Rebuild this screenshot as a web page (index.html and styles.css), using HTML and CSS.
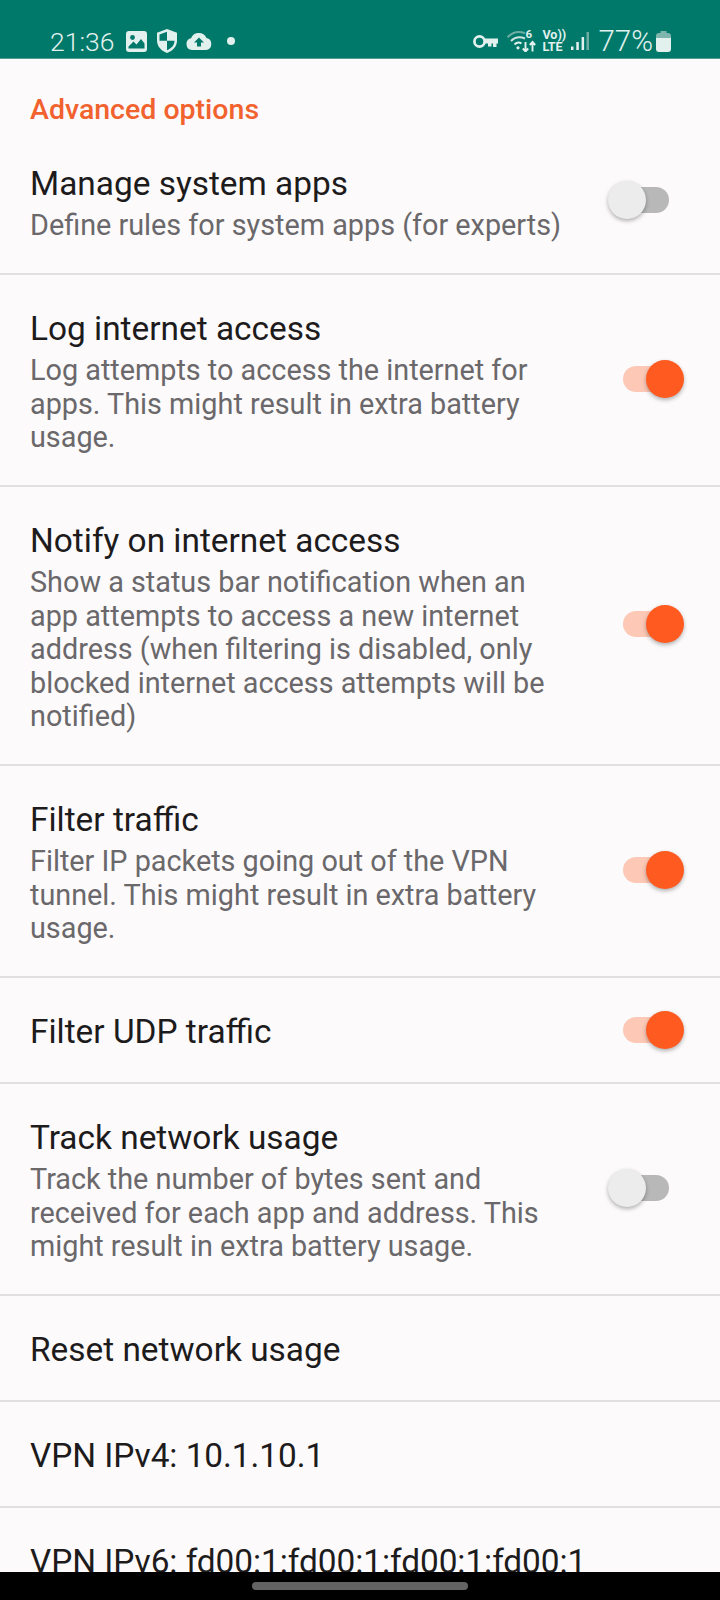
FILE: index.html
```html
<!DOCTYPE html>
<html lang="en">
<head>
    <meta charset="UTF-8">
    <meta name="viewport" content="width=device-width, initial-scale=1.0">
    <title>Advanced options</title>
    <link rel="stylesheet" href="styles.css">
</head>
<body>
    <div class="status-bar">
        <div class="status-left">
            <span class="clock">21:36</span>
            <svg class="icon icon-image" width="21" height="21" viewBox="0 0 21 21"><rect width="21" height="21" rx="3" fill="#e3f1ee"/><circle cx="6.500" cy="6.500" r="2.400" fill="#00796b"/><path d="M2.500 17.500v-2l5-5 3 3 4.500-5.500 3.500 4.500v5z" fill="#00796b"/></svg>
            <svg class="icon icon-shield" width="20" height="24" viewBox="0 0 20 24"><path d="M10 0l10 3.800v7.700c0 5.800-4 10.300-10 12.500C4 21.800 0 17.300 0 11.500V3.800z" fill="#e3f1ee"/><path d="M10 2.800L2.500 5.600v6.100H10zM10 11.700v9.500c4.500-1.900 7.500-5.200 7.500-9.500z" fill="#00796b"/></svg>
            <svg class="icon icon-cloud" width="26" height="17" viewBox="0 0 26 17"><path d="M6 17a6 6 0 0 1-1-11.800A8.500 8.500 0 0 1 20.500 5 6.100 6.100 0 0 1 20 17z" fill="#e3f1ee"/><path d="M13 4.500l5 5h-3v4h-4v-4H8z" fill="#00796b"/></svg>
            <span class="dot"></span>
        </div>
        <div class="status-right">
            <svg class="icon icon-key" width="25" height="13" viewBox="0 0 25 13"><circle cx="6.500" cy="6.500" r="5.100" fill="none" stroke="#e3f1ee" stroke-width="2.700"/><path d="M11 3.500h14v5h-1.500v3.500h-3.500V8.500h-1.500v3h-3.500v-3H11z" fill="#e3f1ee"/></svg>
            <div class="wifi">
                <svg class="icon" width="29" height="22" viewBox="0 0 29 22"><path d="M.500 7.200C5.800 1.900 12 .8 18 3.200" fill="none" stroke="#6fada3" stroke-width="2"/><path d="M4 11c3.600-3.600 9-4.600 14-2.500" fill="none" stroke="#cfe4e0" stroke-width="2"/><path d="M7.500 14.500c2-2 5-2.300 7-1" fill="none" stroke="#e3f1ee" stroke-width="2"/><circle cx="11" cy="17.800" r="1.600" fill="#e3f1ee"/><path d="M18.500 12v9.500M15.800 18.500l2.700 3 2.700-3M25.500 21.500V12M22.800 15l2.700-3 2.700 3" fill="none" stroke="#e3f1ee" stroke-width="1.900"/></svg>
                <span class="wifi-six">6</span>
            </div>
            <div class="volte"><span>Vo))</span><span>LTE</span></div>
            <svg class="icon icon-signal" width="18" height="18" viewBox="0 0 18 18"><rect x="0" y="14.500" width="2.500" height="3.500" fill="#e3f1ee"/><rect x="5.300" y="10" width="2.500" height="8" fill="#e3f1ee"/><rect x="10.600" y="5" width="2.500" height="13" fill="#e3f1ee"/><rect x="15.500" y="0" width="2.500" height="18" fill="#6fada3"/></svg>
            <span class="battery-text">77%</span>
            <svg class="icon" width="15" height="21" viewBox="0 0 15 21"><path d="M4.500 0h6v2H12a3 3 0 0 1 3 3v2H0V5a3 3 0 0 1 3-3h1.500z" fill="#7fb5ac"/><path d="M0 7h15v11a3 3 0 0 1-3 3H3a3 3 0 0 1-3-3z" fill="#e3f1ee"/></svg>
        </div>
    </div>

    <div class="settings">
        <div class="section-title">Advanced options</div>

        <div class="row row-first">
            <div class="row-text">
                <div class="row-title">Manage system apps</div>
                <div class="row-summary">Define rules for system apps (for experts)</div>
            </div>
            <div class="switch"><span class="track"></span><span class="thumb"></span></div>
        </div>

        <div class="row">
            <div class="row-text">
                <div class="row-title">Log internet access</div>
                <div class="row-summary">Log attempts to access the internet for apps. This might result in extra battery usage.</div>
            </div>
            <div class="switch on"><span class="track"></span><span class="thumb"></span></div>
        </div>

        <div class="row">
            <div class="row-text">
                <div class="row-title">Notify on internet access</div>
                <div class="row-summary">Show a status bar notification when an app attempts to access a new internet address (when filtering is disabled, only blocked internet access attempts will be notified)</div>
            </div>
            <div class="switch on"><span class="track"></span><span class="thumb"></span></div>
        </div>

        <div class="row">
            <div class="row-text">
                <div class="row-title">Filter traffic</div>
                <div class="row-summary">Filter IP packets going out of the VPN tunnel. This might result in extra battery usage.</div>
            </div>
            <div class="switch on"><span class="track"></span><span class="thumb"></span></div>
        </div>

        <div class="row row-single">
            <div class="row-text">
                <div class="row-title">Filter UDP traffic</div>
            </div>
            <div class="switch on"><span class="track"></span><span class="thumb"></span></div>
        </div>

        <div class="row">
            <div class="row-text">
                <div class="row-title">Track network usage</div>
                <div class="row-summary">Track the number of bytes sent and received for each app and address. This might result in extra battery usage.</div>
            </div>
            <div class="switch"><span class="track"></span><span class="thumb"></span></div>
        </div>

        <div class="row row-single">
            <div class="row-text">
                <div class="row-title">Reset network usage</div>
            </div>
        </div>

        <div class="row row-single">
            <div class="row-text">
                <div class="row-title row-address">VPN IPv4: 10.1.10.1</div>
            </div>
        </div>

        <div class="row row-single">
            <div class="row-text row-text-wide">
                <div class="row-title row-address">VPN IPv6: fd00:1:fd00:1:fd00:1:fd00:1</div>
            </div>
        </div>
    </div>

    <div class="nav-bar"><span class="nav-pill"></span></div>
</body>
</html>
```

FILE: styles.css
```css
/* Base Styles */
html, body {
    margin: 0;
    padding: 0;
    height: 100%;
    background-color: #fcfafb;
    font-family: Roboto, sans-serif;
    overflow: hidden;
}

body {
    display: flex;
    flex-direction: column;
    height: 1600px;
}

/* Status bar */
.status-bar {
    flex: none;
    height: 59px;
    box-sizing: border-box;
    padding: 28px 49px 0 50px;
    background-color: #00796b;
    display: flex;
    justify-content: space-between;
    align-items: flex-start;
    color: #e3f1ee;
    border-bottom: 1px solid #4f9e92;
}

.status-left,
.status-right {
    display: flex;
    align-items: center;
    height: 26px;
}

.clock {
    font-size: 26.500px;
    font-weight: 300;
    margin-right: 12px;
}

.icon {
    display: block;
    flex: none;
}

.icon-image {
    margin-right: 10px;
}

.icon-shield {
    margin-right: 9px;
}

.icon-cloud {
    margin-right: 15px;
}

.dot {
    width: 8px;
    height: 8px;
    background-color: #e3f1ee;
    border-radius: 50%;
}

.icon-key {
    margin-right: 9px;
}

.wifi {
    position: relative;
    margin-right: 6px;
}

.wifi-six {
    position: absolute;
    top: -2px;
    left: 18px;
    font-size: 11.500px;
    line-height: 13px;
    font-weight: 700;
}

.volte {
    display: flex;
    flex-direction: column;
    width: 20px;
    font-size: 12.500px;
    font-weight: 700;
    line-height: 12.500px;
    margin-right: 9px;
}

.icon-signal {
    margin-right: 9px;
}

.battery-text {
    font-size: 29.500px;
    font-weight: 300;
    margin-right: 3px;
}

/* Settings list */
.settings {
    flex: 1;
    min-height: 0;
    overflow: hidden;
}

.section-title {
    padding: 36px 30px 0;
    font-size: 28.500px;
    line-height: 30px;
    font-weight: 500;
    color: #f1622e;
}

.row {
    display: flex;
    align-items: center;
    justify-content: space-between;
    box-sizing: border-box;
    padding: 30px 0 30.500px 30px;
    border-bottom: 2px solid #e1e0e1;
}

.row-first {
    padding-top: 35px;
}

.row-single {
    height: 106px;
    padding-top: 2px;
    padding-bottom: 0;
}

.row-text {
    width: 540px;
}

.row-text-wide {
    width: auto;
}

.row-title {
    font-size: 33.400px;
    line-height: 47px;
    color: #1d1b1c;
}

.row-address {
    letter-spacing: -0.050px;
}

.row-summary {
    margin-top: 2px;
    font-size: 28.800px;
    line-height: 33.500px;
    color: #6a686a;
}

.switch {
    position: relative;
    flex: none;
    width: 76px;
    height: 40px;
    margin-right: 36px;
}

.track {
    position: absolute;
    left: 15px;
    right: 15px;
    top: 6px;
    height: 26px;
    border-radius: 13px;
    background-color: #b8b8b8;
}

.thumb {
    position: absolute;
    top: 0;
    left: 0;
    width: 38px;
    height: 38px;
    border-radius: 50%;
    background-color: #ececec;
    box-shadow: 0 2px 4px rgba(0, 0, 0, 0.3);
}

.switch.on .track {
    background-color: #fdc8b6;
}

.switch.on .thumb {
    left: 38px;
    background-color: #ff5a1f;
}

/* Navigation bar */
.nav-bar {
    flex: none;
    height: 28px;
    background-color: #000;
    display: flex;
    justify-content: center;
    align-items: center;
}

.nav-pill {
    width: 216px;
    height: 8px;
    border-radius: 4px;
    background-color: #636363;
}
```
